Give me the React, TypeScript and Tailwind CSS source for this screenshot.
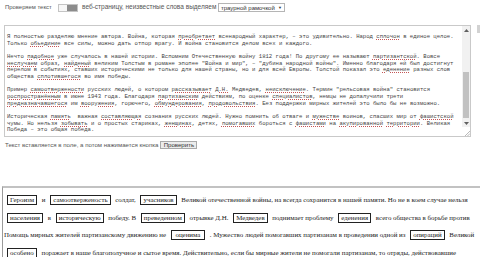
import React from "react";

const taLines: string[] = [
  "Я полностью разделяю мнение автора. Война, которая {преобретает} всенародный характер, – это удивительно. Народ {сплочон} в единое целое.",
  "Только {обьединие} все силы, можно дать отпор врагу. И война становится делом всех и каждого.",
  "",
  "Нечто {падобное} уже случалось в нашей истории. Вспомним Отечественную войну 1812 года! По другому ее называют {партизантской}. Вовсе",
  "{неслучаем} образ, {найденый} великим Толстым в романе эпопее \"Война и мир\", – \"дубина народной войны\". Именно благодаря ей был достигнут",
  "перелом в событиях, ставших историческими не только для нашей страны, но и для всей Европы. Толстой показал это {еденение} разных слов",
  "общества {сплотившегося} во имя победы.",
  "",
  "Пример {самоотвержености} русских людей, о котором {рассказывает} {Д.Н.} Медведев, {неисключение}. Термин \"рельсовая война\" становится",
  "{роспространённым} в июне 1943 года. Благодаря {партизанским} действиям, по оценке {специалистов}, немцы не допалучили трети",
  "{предназначавшегося} им {вооружения}, горючего, {обмундерования}, {продовольствия}. Без поддержки мирных жителей это было бы не возможно.",
  "",
  "Историческая {память}  важная {составляющая} сознания русских людей. Нужно помнить об отваге и {мужестве} воинов, спасших мир от {фашистской}",
  "чумы. Но нельзя {зобывать} и о простых стариках, {женщинах}, детях, {помогавших} бороться с {фашистами} на {акупированной} {территории}. Великая",
  "Победа – это общая победа.",
];

const boxLines: string[] = [
  "[Героизм] и [самоотверженость] солдат, [учасников] Великой отечественной войны, на всегда сохранится в нашей памяти. Но не в коем случае нельзя",
  "[населения] в [историческую] победу. В [преведенном] отрывке Д.Н. [Медведев] поднимает проблему [еденения] всего общества в борьбе против",
  "Помощь мирных жителей партизанскому движению не [ оценима ] . Мужество людей помогавших партизанам в проведении одной из [опираций] Великой",
  "[особено] поражает в наше благополучное и сытое время. Действительно, если бы мирные жители не помогали партизанам, то отряды, действовавшие",
];

function TaLine({ text }: { text: string }) {
  const parts = text.split(/(\{[^}]+\})/);
  return (
    <div className="h-[6.66px]">
      {text === "" ? "\u00a0" : null}
      {parts.map((p, i) =>
        p.startsWith("{") ? (
          <span
            key={i}
            className="underline decoration-dotted decoration-[#c45656] decoration-1 underline-offset-[1px]"
          >
            {p.slice(1, -1)}
          </span>
        ) : (
          <span key={i}>{p}</span>
        )
      )}
    </div>
  );
}

function BoxLine({ text }: { text: string }) {
  const parts = text.split(/(\[[^\]]+\])/);
  return (
    <div className="h-[17.5px] whitespace-pre">
      {parts.map((p, i) =>
        p.startsWith("[") ? (
          <span
            key={i}
            className="inline-block border border-[#222] px-[2px] mx-[3px] leading-[8px]"
          >
            {p.slice(1, -1)}
          </span>
        ) : (
          <span key={i}>{p}</span>
        )
      )}
    </div>
  );
}

export default function App() {
  return (
    <div className="w-[480px] h-[257px] overflow-hidden bg-white font-['Liberation_Sans',Arial,sans-serif]">
      {/* top controls */}
      <div className="flex items-center h-[9px] mt-[3px] pl-[5px] text-[#555] leading-none whitespace-nowrap">
        <span className="w-[48px] text-[5.9px]">Проверяем текст</span>
        <div className="ml-[5px] w-[20px] h-[8px] border border-[#c4c4c4] bg-[#f7f7f7] flex justify-end">
          <div className="w-[10px] h-full bg-[#8c8c8c]" />
        </div>
        <span className="ml-[4px] w-[134px] text-[6.5px]">веб-страницу, неизвестные слова выделяем</span>
        <div className="ml-[2px] h-[9px] w-[67px] border border-[#b5b5b5] bg-white flex items-center justify-between px-[2px] text-[#333] text-[6px]">
          <span>траурной рамочкой</span>
          <span className="text-[4px]">▼</span>
        </div>
      </div>

      {/* textarea */}
      <div className="flex items-start mt-[13px] pl-[4px]">
        <div className="w-[468px] h-[112px] border border-[#c9c9c9] flex bg-white">
          <div className="flex-1 overflow-hidden pt-[8px] pl-[2px] font-['Liberation_Mono',monospace] text-[5.6px] leading-[6.66px] text-[#454545] whitespace-pre">
            {taLines.map((l, i) => (
              <TaLine key={i} text={l} />
            ))}
          </div>
          <div className="w-[8px] flex flex-col bg-[#f1f1f1]">
            <div className="h-[8px] flex items-center justify-center">
              <svg width="5" height="3" viewBox="0 0 5 3">
                <path d="M0 3 L2.5 0 L5 3 Z" fill="#606060" />
              </svg>
            </div>
            <div className="h-[38px]" />
            <div className="h-[46px] mx-[1px] bg-[#c1c1c1]" />
            <div className="h-[1px]" />
            <div className="h-[8px] flex items-center justify-center">
              <svg width="5" height="3" viewBox="0 0 5 3">
                <path d="M0 0 L2.5 3 L5 0 Z" fill="#606060" />
              </svg>
            </div>
            <div className="flex-1 bg-white flex items-end justify-end">
              <svg width="6" height="6" viewBox="0 0 6 6">
                <path d="M6 1 L1 6 M6 3.5 L3.5 6" stroke="#9a9a9a" strokeWidth="0.7" />
              </svg>
            </div>
          </div>
        </div>
        <div className="ml-[6px] w-[3px] h-[8px] bg-[#d2d2d2]" />
      </div>

      {/* hint + button */}
      <div className="flex items-center h-[10px] mt-[3px] pl-[5px] text-[6.1px] text-[#555] leading-none whitespace-nowrap">
        <span>Текст вставляется в поле, а потом нажимается кнопка</span>
        <div className="ml-[2px] h-[8px] w-[37px] border border-[#a9a9a9] bg-[#ececec] flex items-center justify-center text-[#333]">
          Проверить
        </div>
      </div>

      {/* result box */}
      <div className="mt-[36px] ml-[2px] w-[600px] h-[80px] border-t-2 border-l border-t-[#c2c2c2] border-l-[#9a9a9a] pt-[3px] pl-[1px] font-['Liberation_Serif','Times_New_Roman',serif] text-[6.9px] leading-[17.5px] text-[#222]">
        {boxLines.map((l, i) => (
          <BoxLine key={i} text={l} />
        ))}
      </div>
    </div>
  );
}
